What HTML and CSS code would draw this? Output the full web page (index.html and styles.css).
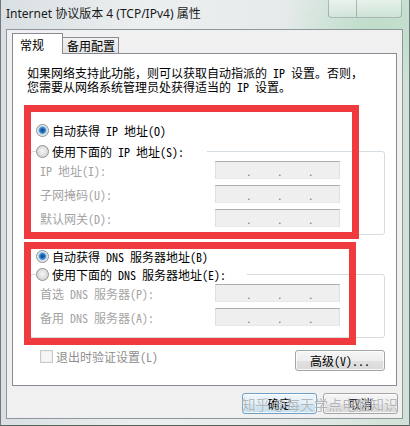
FILE: index.html
```html
<!DOCTYPE html>
<html lang="zh-CN">
<head>
<meta charset="utf-8">
<title>Internet 协议版本 4 (TCP/IPv4) 属性</title>
<link rel="stylesheet" href="styles.css">
</head>
<body>
<div class="window">
  <div class="titlebar">
    <span class="title">Internet 协议版本 4 (TCP/IPv4) 属性</span>
    <div class="caption-btns"><span class="cb cb-help"></span><span class="cb cb-close"></span></div>
  </div>
  <div class="client">
    <div class="tabs">
      <div class="tab tab-active">常规</div>
      <div class="tab">备用配置</div>
    </div>
    <div class="panel">
      <p class="intro">如果网络支持此功能，则可以获取自动指派的 IP 设置。否则，<br>您需要从网络系统管理员处获得适当的 IP 设置。</p>
      <div class="opt opt-first"><span class="radio on"></span><span>自动获得 IP 地址(O)</span></div>
      <fieldset class="group group-ip">
        <legend class="legend-ip"><span class="opt"><span class="radio"></span><span>使用下面的 IP 地址(S):</span></span></legend>
        <div class="row row-first"><span class="lbl">IP 地址(I):</span><span class="ipbox"><i>.</i><i>.</i><i>.</i></span></div>
        <div class="row"><span class="lbl">子网掩码(U):</span><span class="ipbox"><i>.</i><i>.</i><i>.</i></span></div>
        <div class="row"><span class="lbl">默认网关(D):</span><span class="ipbox"><i>.</i><i>.</i><i>.</i></span></div>
      </fieldset>
      <div class="opt opt-dns"><span class="radio on"></span><span>自动获得 DNS 服务器地址(B)</span></div>
      <fieldset class="group group-dns">
        <legend class="legend-dns"><span class="opt"><span class="radio"></span><span>使用下面的 DNS 服务器地址(E):</span></span></legend>
        <div class="row row-first"><span class="lbl">首选 DNS 服务器(P):</span><span class="ipbox"><i>.</i><i>.</i><i>.</i></span></div>
        <div class="row"><span class="lbl">备用 DNS 服务器(A):</span><span class="ipbox"><i>.</i><i>.</i><i>.</i></span></div>
      </fieldset>
      <div class="bottom-row">
        <span class="chk"><span class="box"></span><span>退出时验证设置(L)</span></span>
        <button class="btn btn-adv">高级(V)...</button>
      </div>
      <div class="mark mark-ip"></div>
      <div class="mark mark-dns"></div>
    </div>
    <div class="actions">
      <button class="btn btn-default">确定</button>
      <button class="btn">取消</button>
    </div>
    <div class="watermark">知乎 @每天学点电脑知识</div>
  </div>
</div>
</body>
</html>
```

FILE: styles.css
```css
* { box-sizing: border-box; }
html, body { margin: 0; padding: 0; }
body {
  width: 410px;
  height: 426px;
  overflow: hidden;
  font-family: "Noto Sans Mono CJK SC", "Noto Sans CJK SC", sans-serif;
  font-size: 12px;
  color: #000;
}
.window {
  width: 410px;
  height: 426px;
  display: flex;
  flex-direction: column;
  border-left: 1px solid #6d7880;
  border-right: 1px solid #6d7880;
  border-bottom: 1px solid #56625c;
  background:
    radial-gradient(ellipse 90px 60px at 370px 30px, rgba(170, 215, 185, 0.55), rgba(170, 215, 185, 0) 100%),
    linear-gradient(to right, #d9dfe2 0%, #eceff0 35%, #e6eaeb 70%, #cfe2d5 100%);
}
.titlebar {
  height: 29px;
  flex: none;
  display: flex;
  justify-content: space-between;
  align-items: flex-start;
  padding-left: 5px;
}
.title {
  font-family: "Noto Sans", "Noto Sans CJK SC", sans-serif;
  font-size: 12px;
  line-height: 16px;
  margin-top: 6px;
  color: #1a1a1a;
}
.caption-btns {
  display: flex;
  margin-right: 7px;
  margin-top: -1px;
}
.cb {
  height: 19px;
  border: 1px solid rgba(120, 135, 140, 0.55);
  background: linear-gradient(rgba(255,255,255,0.55), rgba(225,235,232,0.35));
}
.cb-help { width: 29px; border-radius: 0 0 0 4px; }
.cb-close { width: 45px; border-left: none; border-radius: 0 0 4px 0; }

.client {
  width: 397px;
  height: 390px;
  margin-left: 5px;
  border: 1px solid #8d979d;
  background: #f0f0f0;
  position: relative;
}
.tabs {
  display: flex;
  align-items: flex-end;
  height: 23px;
  margin-left: 5px;
  position: relative;
  z-index: 1;
  font-family: "Noto Sans CJK SC", sans-serif;
}
.tab {
  height: 16px;
  width: 56px;
  border: 1px solid #898c95;
  border-left: none;
  border-bottom: none;
  background: linear-gradient(#f2f2f2, #e3e3e3);
  line-height: 15px;
  padding-left: 4px;
}
.tab-active {
  width: 51px;
  height: 21px;
  margin-bottom: -1px;
  border-left: 1px solid #898c95;
  background: #fff;
  padding-left: 7px;
  line-height: 22px;
}
.panel {
  position: relative;
  margin-left: 5px;
  width: 385px;
  height: 333px;
  border: 1px solid #898c95;
  background: #fff;
  padding: 12px 11px 0 14px;
}
.intro {
  margin: 0;
  line-height: 14px;
  white-space: nowrap;
}
.opt {
  display: flex;
  align-items: center;
  height: 16px;
  white-space: nowrap;
}
.opt-first { margin-top: 28px; margin-left: 9px; }
.opt-dns { margin-top: 13px; margin-left: 9px; }
.radio {
  width: 13px;
  height: 13px;
  flex: none;
  margin-right: 3px;
  border-radius: 50%;
  border: 1px solid #8e9196;
  background: radial-gradient(circle at 50% 45%, #f6f6f6 0, #e2e2e2 45%, #c9cacc 100%);
}
.radio.on {
  background: radial-gradient(circle at 50% 48%, #103f78 0, #1f5fa6 1.5px, #3f8fd3 3px, #8ccbf0 3.8px, #dcdcdc 4.4px, #ececec 5px, #c9cacc 100%);
}
.group {
  margin: 0 0 0 3px;
  padding: 0 44px 0 9px;
  border: 1px solid #d5dde2;
  border-radius: 3px;
  min-width: 0;
}
.group-ip { margin-top: 5px; padding-bottom: 7px; }
.group-dns { margin-top: 2px; padding-bottom: 11px; }
.group legend {
  padding: 0;
  margin-left: -4px;
}
.legend-ip { width: 171px; }
.legend-dns { width: 211px; }
.row {
  display: flex;
  justify-content: space-between;
  align-items: center;
  height: 18px;
  margin-top: 6px;
}
.row-first { margin-top: 2px; }
.lbl { color: #a4a4a4; white-space: nowrap; }
.ipbox {
  width: 125px;
  height: 18px;
  border: 1px solid #dbdfe6;
  border-top-color: #abadb3;
  border-bottom-color: #e3e9ef;
  background: #efefef;
  display: flex;
  padding-left: 30px;
  gap: 28px;
  align-items: flex-end;
}
.ipbox i {
  font-style: normal;
  width: 3px;
  line-height: 13px;
  color: #7a7a7a;
  font-size: 11px;
}
.bottom-row {
  display: flex;
  justify-content: space-between;
  align-items: flex-start;
  margin-top: 12px;
}
.chk {
  display: flex;
  align-items: center;
  margin-left: 13px;
  height: 13px;
  color: #8e8e8e;
  white-space: nowrap;
}
.box {
  width: 13px;
  height: 13px;
  margin-right: 3px;
  border: 1px solid #cacaca;
  background: #f6f6f6;
  box-shadow: inset 0 0 0 1px #efefef;
}
.btn {
  font-family: "Noto Sans Mono CJK SC", "Noto Sans CJK SC", sans-serif;
  font-size: 12px;
  color: #000;
  height: 21px;
  padding: 0;
  border: 1px solid #a5a5a5;
  border-radius: 3px;
  background: linear-gradient(#f6f6f6 0%, #eeeeee 50%, #e2e2e2 51%, #d9d9d9 100%);
  box-shadow: inset 0 0 0 1px rgba(255, 255, 255, 0.75);
  line-height: 19px;
}
.btn-adv { width: 90px; }
.mark {
  position: absolute;
  border: 7px solid #ef3b3d;
}
.mark-ip { left: 11px; top: 51px; width: 335px; height: 134px; }
.mark-dns { left: 11px; top: 188px; width: 332px; height: 103px; }
.actions {
  display: flex;
  justify-content: flex-end;
  gap: 6px;
  margin-top: 7px;
  padding-right: 4px;
}
.actions .btn { width: 75px; }
.btn-default {
  border-color: #6f9fc4;
  background: linear-gradient(#eef6fb 0%, #e2eff7 50%, #d1e6f2 51%, #c6e0ef 100%);
}
.watermark {
  position: absolute;
  right: 4px;
  bottom: 5px;
  font-family: "Noto Sans CJK SC", sans-serif;
  font-size: 14px;
  line-height: 18px;
  color: rgba(110, 115, 120, 0.5);
  text-shadow: 0 0 1px rgba(255, 255, 255, 0.9);
  white-space: nowrap;
}
```
